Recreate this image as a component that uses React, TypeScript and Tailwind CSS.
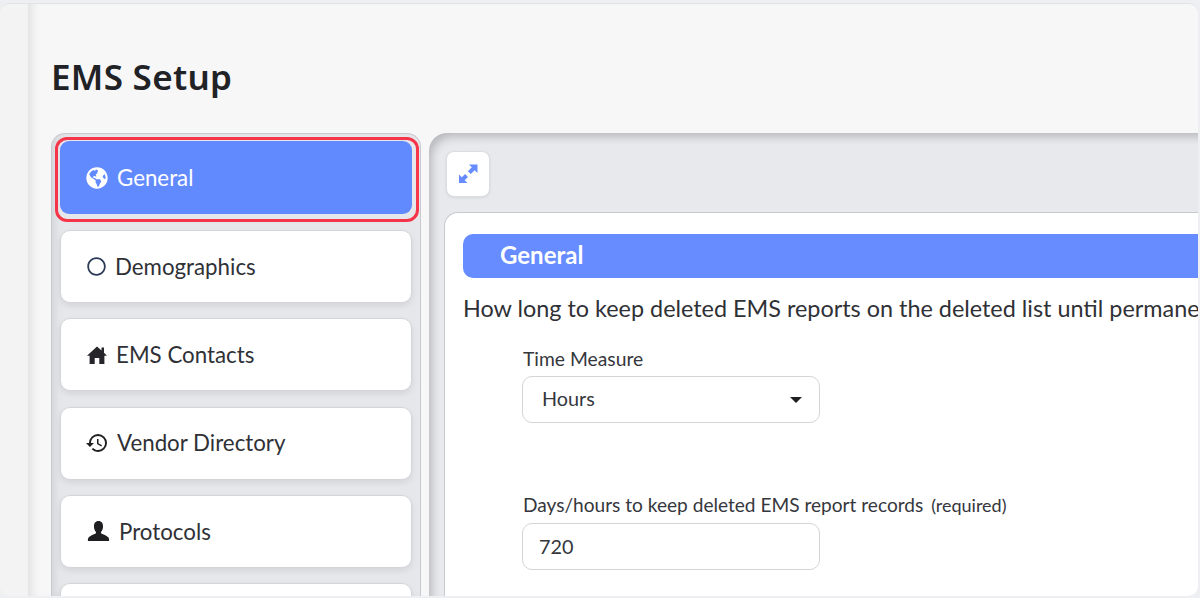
import type { ReactNode } from "react";
import { FaGlobeAmericas, FaRegCircle } from "react-icons/fa";
import { MdHistory } from "react-icons/md";

function UserIcon() {
  return (
    <svg viewBox="0 0 24 22" className="h-[20px] w-[23px]" fill="#1f1f22">
      <path d="M12 0c3.400 0 5 2.600 5 5.800 0 2.600-.9 4.600-2 6-.5.7-.3 1.700.5 2.100 2.600 1.200 6.800 2.600 7.700 4.600.4 1 .5 2.200.5 3.500H.3c0-1.300.1-2.500.5-3.500.9-2 5.100-3.400 7.700-4.600.8-.4 1-1.400.5-2.100-1.100-1.400-2-3.400-2-6C7 2.600 8.600 0 12 0z" />
    </svg>
  );
}

function HomeIcon() {
  return (
    <svg viewBox="0 0 20 18" className="h-[18px] w-[20px]" fill="#26262a">
      <path d="M10 0.500 14.500 4.500V1.500H17V6.700L20 9.800H17.400V18H12.300V12H7.700V18H2.600V9.800H0z" />
    </svg>
  );
}

function ExpandIcon() {
  return (
    <svg viewBox="0 0 20 20" className="h-[20px] w-[20px]" fill="#668cff">
      <path d="M11 0.500h8.500V9l-2.800-2.800-3.900 3.900-2.900-2.900 3.900-3.900z" />
      <path d="M1 10.500V19h8.500l-2.800-2.800 3.300-3.300-2.900-2.900-3.300 3.300z" />
    </svg>
  );
}

function NavItem({
  icon,
  label,
  gap,
}: {
  icon: ReactNode;
  label: string;
  gap: string;
}) {
  return (
    <div
      className={`flex h-[73px] shrink-0 items-center rounded-[10px] border border-[#d4d5d9] bg-white pl-[26px] text-[22.300px] text-[#2f3136] shadow-[0_3px_6px_rgba(0,0,0,0.08)] ${gap}`}
    >
      {icon}
      <span>{label}</span>
    </div>
  );
}

export default function App() {
  return (
    <div className="h-[598px] w-[1200px] overflow-hidden bg-[#eeeff2] pr-[2px] pt-[3px] pb-[2px] font-['Lato',sans-serif]">
      <div className="flex h-full overflow-hidden rounded-[10px] border-t border-[#e3e3e6] bg-[#f6f6f7]">
        <div className="w-[28px] shrink-0 bg-[#f3f3f4]" />
        <div className="flex min-w-0 flex-1 flex-col overflow-hidden bg-[#f7f7f8] pl-[23px] shadow-[inset_10px_0_10px_-6px_rgba(0,0,0,0.09)]">
          <h1 className="mt-[52px] h-[77px] text-[35px] leading-[42px] font-semibold tracking-[0.3px] text-[#212226] font-['Noto_Sans',sans-serif]">
            EMS Setup
          </h1>
          <div className="flex min-h-0 flex-1 gap-[8px]">
            <div className="flex w-[370px] shrink-0 flex-col gap-[15.250px] rounded-t-[14px] border-x border-t border-[#c9cacf] bg-[#e6e7eb] px-[8px] pt-[3px] shadow-[inset_6px_0_8px_-4px_rgba(0,0,0,0.1)]">
              <div className="-mb-[7.250px] -ml-[5px] -mr-[7px] shrink-0 rounded-[12px] border-[3px] border-[#f5364a] pl-[2px] pr-[4px] pt-[1px] pb-[5px]">
                <div className="flex h-[73px] items-center gap-[9px] rounded-[9px] bg-[#628aff] pl-[26px] text-[22.300px] text-white">
                  <FaGlobeAmericas className="h-[22px] w-[22px]" />
                  <span>General</span>
                </div>
              </div>
              <NavItem icon={<FaRegCircle className="h-[19px] w-[19px] text-[#2b3a55]" />} label="Demographics" gap="gap-[9px]" />
              <NavItem icon={<HomeIcon />} label="EMS Contacts" gap="gap-[9px]" />
              <NavItem icon={<MdHistory className="h-[24px] w-[24px] -ml-[2px] text-[#1f1f22]" />} label="Vendor Directory" gap="gap-[8px]" />
              <NavItem icon={<UserIcon />} label="Protocols" gap="gap-[9px]" />
              <NavItem icon={null} label="" gap="gap-0" />
            </div>
            <div className="min-w-0 flex-1 rounded-tl-[18px] bg-[#e8e9ed] pl-[15px] pt-[18px] shadow-[inset_6px_7px_8px_-3px_rgba(0,0,0,0.2)]">
              <div className="ml-[2px] flex h-[46px] w-[44px] items-center justify-center rounded-[8px] border border-[#dcdde1] bg-white shadow-[0_1px_3px_rgba(0,0,0,0.08)]">
                <ExpandIcon />
              </div>
              <div className="mt-[15px] h-full rounded-tl-[14px] border-l border-t border-[#c9cacf] bg-white pl-[18px] pt-[21px]">
                <div className="flex h-[44px] items-center rounded-l-[10px] bg-[#668cff] pb-[3px] pl-[37px] text-[24px] font-bold text-white">
                  General
                </div>
                <p className="mt-[15px] whitespace-nowrap text-[23.400px] leading-[30px] text-[#2f3136]">
                  How long to keep deleted EMS reports on the deleted list until permanently removed
                </p>
                <div className="ml-[59px] mt-[24px] w-[298px]">
                  <label className="ml-[1px] block text-[19.300px] leading-[24px] text-[#35373c]">Time Measure</label>
                  <div className="mt-[5px] flex h-[47px] items-center justify-between rounded-[10px] border border-[#d4d5d9] bg-white pb-[2px] pl-[19px] pr-[17px] text-[19.800px] text-[#35373c]">
                    <span>Hours</span>
                    <span className="mt-[2px] h-0 w-0 border-x-[6.500px] border-t-[6px] border-x-transparent border-t-[#1f1f22]" />
                  </div>
                  <label className="ml-[1px] mt-[70px] block whitespace-nowrap text-[19.100px] leading-[24px] text-[#35373c]">
                    Days/hours to keep deleted EMS report records{" "}
                    <span className="ml-[3px] text-[18px]">(required)</span>
                  </label>
                  <div className="mt-[6px] flex h-[47px] items-center rounded-[10px] border border-[#d4d5d9] bg-white pl-[16px] text-[19.800px] text-[#35373c]">
                    720
                  </div>
                </div>
              </div>
            </div>
          </div>
        </div>
      </div>
    </div>
  );
}
